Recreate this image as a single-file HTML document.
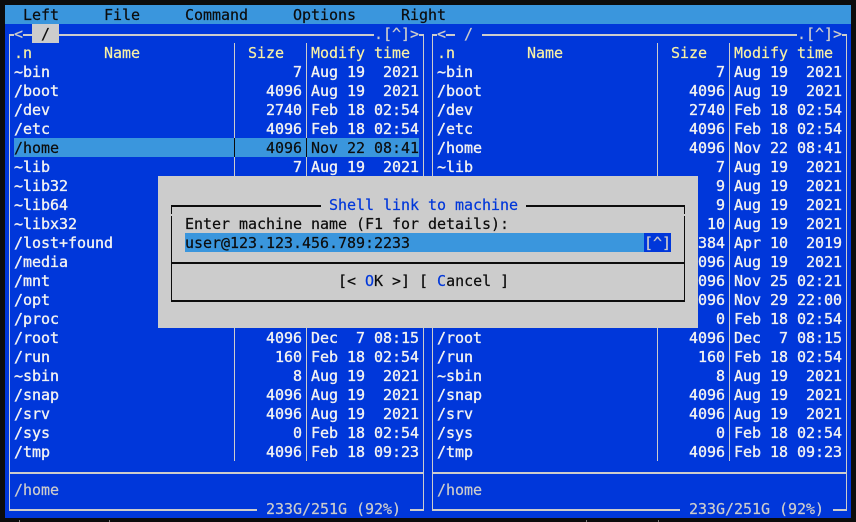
<!DOCTYPE html>
<html><head><meta charset="utf-8"><style>
html,body{margin:0;padding:0;background:#0c0c0c}
#s{position:relative;width:856px;height:522px;overflow:hidden;background:#0c0c0c;font-family:"DejaVu Sans Mono","Liberation Mono",monospace;font-size:15px;letter-spacing:-.03px;color:#ccc}
#s div,#s pre{position:absolute;margin:0}
pre{font:inherit;line-height:19px;letter-spacing:inherit;white-space:pre;padding-top:1px;-webkit-text-stroke:.2px}
.l{background:#ccc}.d{background:#0c0c0c}
pre.w{color:#f2f2f2;-webkit-text-stroke:.35px}.y{color:#f9f1a5}.k{color:#0c0c0c}.b{color:#0037da}
span.k{-webkit-text-stroke:.2px #0c0c0c}
</style></head><body><div id="s">
<div style="left:5px;top:5px;width:846px;height:513px;background:#0037da"></div>
<div style="left:5px;top:5px;width:846px;height:19px;background:#3a96dd"></div>
<pre class="k" style="left:5px;top:5px">  Left     File     Command     Options     Right</pre>

<div style="left:14px;top:138px;width:405px;height:19px;background:#3a96dd"></div>

<div class="l" style="left:9px;top:34px;height:477px;width:1px"></div>
<div class="l" style="left:423px;top:34px;height:477px;width:1px"></div>
<div class="l" style="left:432px;top:34px;height:477px;width:1px"></div>
<div class="l" style="left:846px;top:34px;height:477px;width:1px"></div>

<div class="l" style="left:9px;top:34px;width:5px;height:2px"></div>
<div class="l" style="left:23px;top:34px;width:9px;height:2px"></div>
<div class="l" style="left:59px;top:34px;width:315px;height:2px"></div>
<div class="l" style="left:419px;top:34px;width:5px;height:2px"></div>
<div class="l" style="left:432px;top:34px;width:5px;height:2px"></div>
<div class="l" style="left:446px;top:34px;width:9px;height:2px"></div>
<div class="l" style="left:482px;top:34px;width:315px;height:2px"></div>
<div class="l" style="left:842px;top:34px;width:5px;height:2px"></div>

<div class="l" style="left:9px;top:472px;width:415px;height:2px"></div>
<div class="l" style="left:432px;top:472px;width:415px;height:2px"></div>
<div class="l" style="left:9px;top:509px;width:248px;height:2px"></div>
<div class="l" style="left:410px;top:509px;width:14px;height:2px"></div>
<div class="l" style="left:432px;top:509px;width:248px;height:2px"></div>
<div class="l" style="left:833px;top:509px;width:14px;height:2px"></div>

<div class="l" style="left:234px;top:43px;width:1px;height:418px"></div>
<div class="l" style="left:306px;top:43px;width:1px;height:418px"></div>
<div class="l" style="left:657px;top:43px;width:1px;height:418px"></div>
<div class="l" style="left:729px;top:43px;width:1px;height:418px"></div>
<div class="d" style="left:234px;top:138px;width:1px;height:19px"></div>
<div class="d" style="left:306px;top:138px;width:1px;height:19px"></div>

<pre style="left:14px;top:24px">&lt;</pre>
<div class="l" style="left:32px;top:24px;width:27px;height:19px"></div>
<pre class="k" style="left:41px;top:24px">/</pre>
<pre style="left:374px;top:24px">.[^]&gt;</pre>
<pre style="left:437px;top:24px">&lt;</pre>
<pre style="left:464px;top:24px">/</pre>
<pre style="left:797px;top:24px">.[^]&gt;</pre>

<pre class="y" style="left:14px;top:43px">.n        Name</pre>
<pre class="y" style="left:248px;top:43px">Size</pre>
<pre class="y" style="left:311px;top:43px">Modify time</pre>
<pre class="y" style="left:437px;top:43px">.n        Name</pre>
<pre class="y" style="left:671px;top:43px">Size</pre>
<pre class="y" style="left:734px;top:43px">Modify time</pre>

<pre class="w" style="left:14px;top:62px">~bin
/boot
/dev
/etc
<span class="k">/home</span>
~lib
~lib32
~lib64
~libx32
/lost+found
/media
/mnt
/opt
/proc
/root
/run
~sbin
/snap
/srv
/sys
/tmp</pre>
<pre class="w" style="left:239px;top:62px;width:63px;text-align:right">7
4096
2740
4096
<span class="k">4096</span>
7
9
9
10
16384
4096
4096
4096
0
4096
160
8
4096
4096
0
4096</pre>
<pre class="w" style="left:311px;top:62px">Aug 19  2021
Aug 19  2021
Feb 18 02:54
Feb 18 02:54
<span class="k">Nov 22 08:41</span>
Aug 19  2021
Aug 19  2021
Aug 19  2021
Aug 19  2021
Apr 10  2019
Aug 19  2021
Nov 25 02:21
Nov 29 22:00
Feb 18 02:54
Dec  7 08:15
Feb 18 02:54
Aug 19  2021
Aug 19  2021
Aug 19  2021
Feb 18 02:54
Feb 18 09:23</pre>

<pre class="w" style="left:437px;top:62px">~bin
/boot
/dev
/etc
/home
~lib
~lib32
~lib64
~libx32
/lost+found
/media
/mnt
/opt
/proc
/root
/run
~sbin
/snap
/srv
/sys
/tmp</pre>
<pre class="w" style="left:662px;top:62px;width:63px;text-align:right">7
4096
2740
4096
4096
7
9
9
10
16384
4096
4096
4096
0
4096
160
8
4096
4096
0
4096</pre>
<pre class="w" style="left:734px;top:62px">Aug 19  2021
Aug 19  2021
Feb 18 02:54
Feb 18 02:54
Nov 22 08:41
Aug 19  2021
Aug 19  2021
Aug 19  2021
Aug 19  2021
Apr 10  2019
Aug 19  2021
Nov 25 02:21
Nov 29 22:00
Feb 18 02:54
Dec  7 08:15
Feb 18 02:54
Aug 19  2021
Aug 19  2021
Aug 19  2021
Feb 18 02:54
Feb 18 09:23</pre>

<pre style="left:14px;top:480px">/home</pre>
<pre style="left:437px;top:480px">/home</pre>
<pre style="left:266px;top:499px">233G/251G (92%)</pre>
<pre style="left:689px;top:499px">233G/251G (92%)</pre>

<div class="l" style="left:158px;top:176px;width:540px;height:152px"></div>
<div class="d" style="left:171px;top:205px;width:150px;height:2px"></div>
<div class="d" style="left:526px;top:205px;width:159px;height:2px"></div>
<div class="d" style="left:171px;top:205px;width:1px;height:9px"></div>
<div class="d" style="left:684px;top:205px;width:1px;height:9px"></div>
<div class="d" style="left:171px;top:216px;width:1px;height:86px"></div>
<div class="d" style="left:684px;top:216px;width:1px;height:86px"></div>
<div class="d" style="left:171px;top:262px;width:514px;height:2px"></div>
<div class="d" style="left:171px;top:300px;width:514px;height:2px"></div>
<pre class="b" style="left:329px;top:195px">Shell link to machine</pre>
<pre class="k" style="left:185px;top:214px">Enter machine name (F1 for details):</pre>
<div style="left:185px;top:233px;width:459px;height:19px;background:#3a96dd"></div>
<pre class="k" style="left:185px;top:233px">user@123.123.456.789:2233</pre>
<div style="left:644px;top:233px;width:27px;height:19px;background:#0037da"></div>
<pre style="left:644px;top:233px">[^]</pre>
<pre class="k" style="left:338px;top:271px">[&lt; <span class="b">O</span>K &gt;] [ <span class="b">C</span>ancel ]</pre>

<div class="l" style="left:19px;top:520px;width:1px;height:2px;opacity:.6"></div>
<div class="l" style="left:109px;top:520px;width:1px;height:2px;opacity:.6"></div>
<div class="l" style="left:586px;top:520px;width:1px;height:2px;opacity:.6"></div>
<div class="l" style="left:658px;top:520px;width:1px;height:2px;opacity:.6"></div>
</div></body></html>
